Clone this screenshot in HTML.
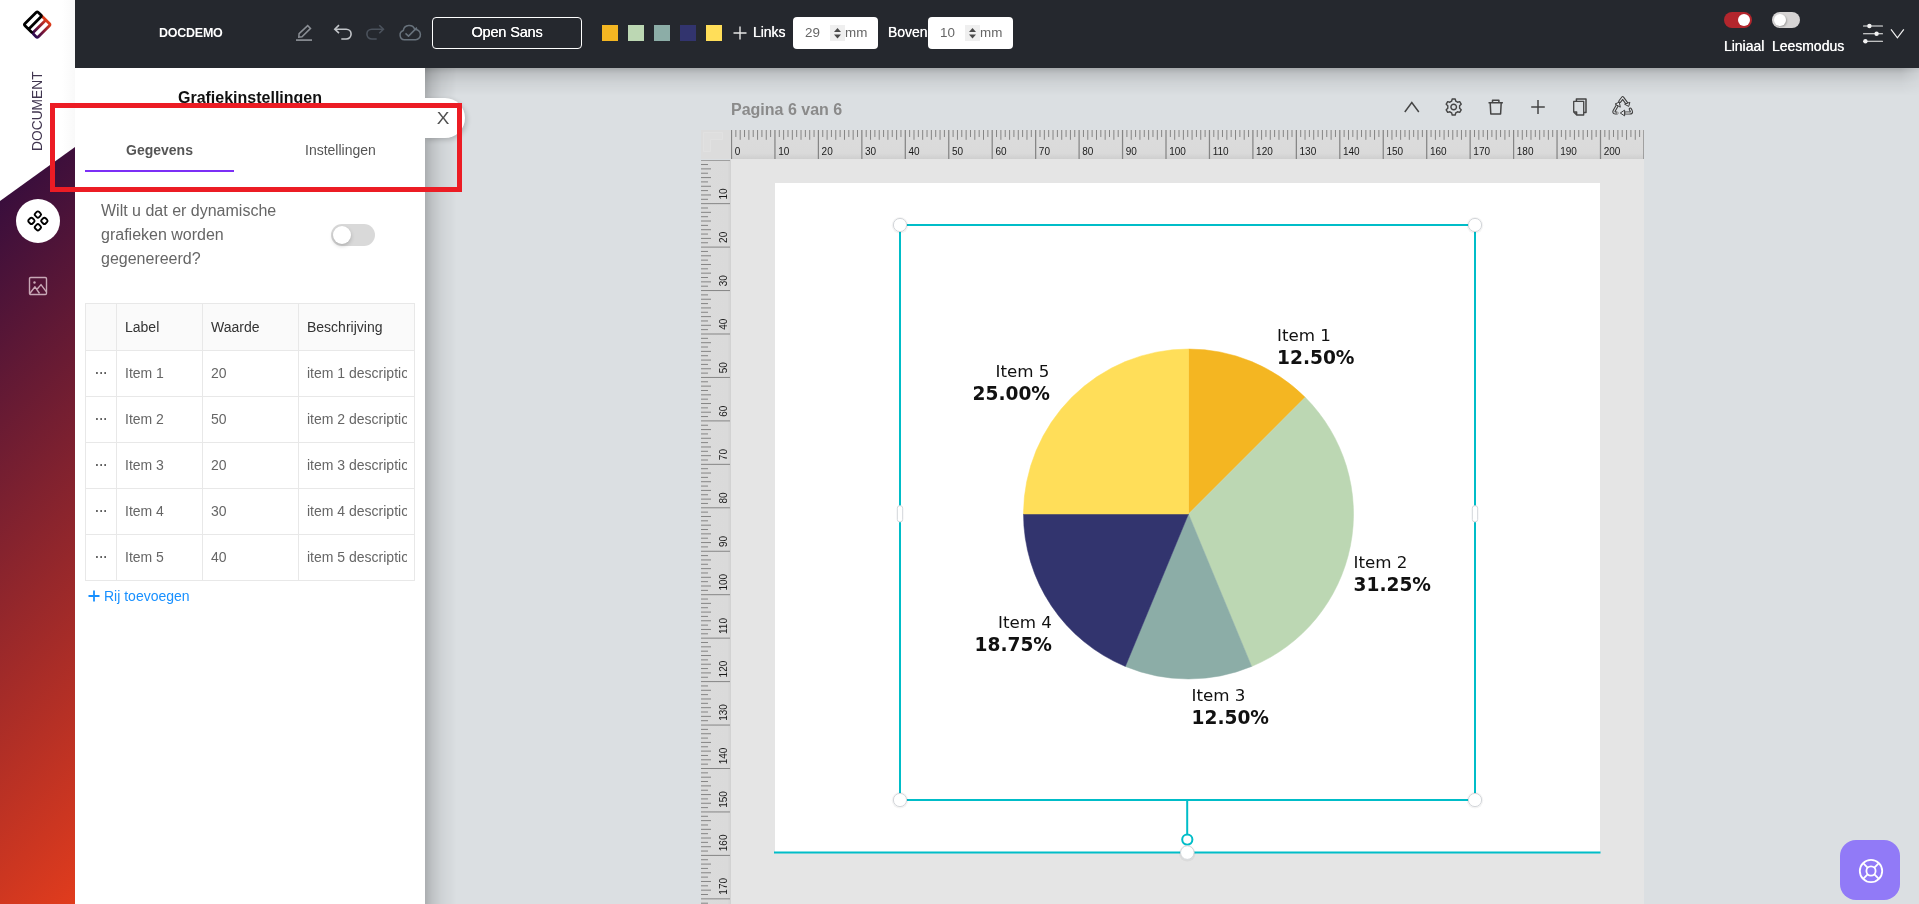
<!DOCTYPE html>
<html lang="nl">
<head>
<meta charset="utf-8">
<title>DOCDEMO - Grafiekinstellingen</title>
<style>
*{box-sizing:border-box;margin:0;padding:0}
html,body{width:1919px;height:904px;overflow:hidden}
body{background:#dbdfe2;font-family:"Liberation Sans",Arial,sans-serif;color:#333;position:relative}
.abs{position:absolute}
#wrap{position:absolute;left:0;top:0;width:1919px;height:904px;overflow:hidden;will-change:transform}
/* sidebar */
#side{position:absolute;left:0;top:0;width:75px;height:904px;background:linear-gradient(90deg,#fff 0,#fff 62px,#f9f9f9 75px)}
#sidegrad{position:absolute;left:0;top:0;width:75px;height:904px;background:linear-gradient(135deg,rgb(14,2,68) 0%,rgb(225,60,29) 100%);clip-path:polygon(0 201px,75px 147px,75px 904px,0 904px)}
#doclabel{position:absolute;left:28px;top:151px;transform-origin:0 0;transform:rotate(-90deg);font-size:13.8px;letter-spacing:0;color:#40354f;white-space:nowrap;line-height:20px}
#circ{position:absolute;left:16px;top:199px;width:44px;height:44px;border-radius:50%;background:#fff}
/* topbar */
#top{position:absolute;left:75px;top:0;width:1844px;height:68px;background:#25282e}
#topshadow{position:absolute;left:425px;top:68px;width:1494px;height:30px;background:linear-gradient(180deg,rgba(0,0,0,.24) 0,rgba(0,0,0,.12) 6px,rgba(0,0,0,.05) 15px,rgba(0,0,0,0) 28px);-webkit-mask-image:linear-gradient(90deg,#000 0,#000 1476px,rgba(0,0,0,.45) 1494px);mask-image:linear-gradient(90deg,#000 0,#000 1476px,rgba(0,0,0,.45) 1494px)}
#top .t{position:absolute;color:#fff;white-space:nowrap}
#docname{left:84px;top:26px;font-size:12.5px;font-weight:bold;letter-spacing:-.25px;line-height:14px}
#fontbox{position:absolute;left:357px;top:17px;width:150px;height:32px;border:1px solid #fff;border-radius:4px;color:#fff;font-size:14.6px;text-align:center;line-height:28px;letter-spacing:-.2px;text-shadow:0 0 .6px #fff}
.sw{position:absolute;top:25px;width:16px;height:16px}
.numbox{position:absolute;top:17px;width:85px;height:32px;background:#fff;border-radius:4px}
.numbox .v{position:absolute;left:12px;top:8px;font-size:13.4px;color:#666;line-height:16px}
.numbox .sp{position:absolute;left:37px;top:8px;width:15px;height:16px;background:#efefef}
.numbox .mm{position:absolute;left:52px;top:8px;font-size:13.4px;color:#666;line-height:16px}
.pill{position:absolute;top:12px;width:28px;height:16px;border-radius:8px}
.pill i{position:absolute;top:2px;width:12px;height:12px;border-radius:50%;background:#fff}
/* panel */
#panel{position:absolute;left:75px;top:68px;width:350px;height:836px;background:#fff}
#pshadow{position:absolute;left:425px;top:68px;width:34px;height:836px;background:linear-gradient(90deg,rgba(0,0,0,.22) 0,rgba(0,0,0,.13) 7px,rgba(0,0,0,.05) 17px,rgba(0,0,0,0) 32px)}
#closetab{position:absolute;left:425px;top:98px;width:40px;height:40px;background:#fff;border-radius:0 20px 20px 0;box-shadow:2px 2px 5px rgba(0,0,0,.18)}
#closetab span{position:absolute;left:8px;top:10px;width:20px;text-align:center;font-size:16.5px;line-height:20px;color:#505050;transform:scaleX(1.15);font-weight:normal}
#ptitle{position:absolute;left:0;top:21px;width:350px;text-align:center;font-size:16px;font-weight:bold;color:#111;line-height:18px}
.tab{position:absolute;top:73px;font-size:14px;line-height:18px;color:#555;white-space:nowrap}
#tabline{position:absolute;left:10px;top:102px;width:149px;height:2px;background:#7c2ff6}
#q{position:absolute;left:26px;top:131px;width:200px;font-size:16px;line-height:24px;color:#666}
#qtog{position:absolute;left:256px;top:156px;width:44px;height:22px;border-radius:11px;background:#d9d9d9}
#qtog i{position:absolute;left:2px;top:2px;width:18px;height:18px;border-radius:50%;background:#fff;box-shadow:0 2px 4px rgba(0,0,0,.2)}
#tbl{position:absolute;left:10px;top:235px;width:329px;border-collapse:collapse;table-layout:fixed;font-size:14px}
#tbl td,#tbl th{border:1px solid #e8e8e8;height:46px;padding:0 0 0 8px;text-align:left;font-weight:normal;white-space:nowrap;overflow:hidden}
#tbl th{background:#fafafa;color:#333;height:47px}
#tbl td{color:#666;padding-bottom:2px}
#tbl td.d{padding:0 0 2px 1px;text-align:center;color:#5a5a5a;font-size:12px;letter-spacing:.2px;font-weight:bold}
#tbl td div{width:100px;overflow:hidden}
#addrow{position:absolute;left:13px;top:519px;font-size:14px;line-height:18px;color:#1890ff;white-space:nowrap}
/* canvas */
#pgtitle{position:absolute;left:731px;top:101px;font-size:16px;font-weight:bold;color:#8a8a8a;line-height:18px;white-space:nowrap}
#canvasbg{position:absolute;left:731px;top:158px;width:913px;height:746px;background:#e5e5e5}
#hr{position:absolute;left:731px;top:130px;width:913px;height:29px;background:linear-gradient(180deg,#dcdcdc 0,#dadada 80%,#cfcfcf 100%)}
#vr{position:absolute;left:701px;top:160px;width:30px;height:744px;background:linear-gradient(90deg,#dbdbdb 0,#dadada 88%,#d1d1d1 100%)}
#corner{position:absolute;left:701px;top:130px;width:30px;height:29px;background:#dcdcdc}
svg.rul text{font-family:"Liberation Sans",Arial,sans-serif;font-size:10px;fill:#1a1a1a}
svg.rul .mj{stroke:#858585;stroke-width:1.25}
svg.rul .mn{stroke:#858585;stroke-width:1}
svg.rul.v .mj{stroke-width:1}
#page{position:absolute;left:775px;top:183px;width:825px;height:669px;background:#fff}
#overlay{position:absolute;left:0;top:0;width:1919px;height:904px;pointer-events:none}
#overlay text{font-family:"DejaVu Sans",sans-serif;fill:#111}
#help{position:absolute;left:1840px;top:840px;width:60px;height:60px;border-radius:16px;background:#917af7}
#redbox{position:absolute;left:50px;top:103px;width:412px;height:89px;border:5px solid #ec1c24}
</style>
</head>
<body>
<div id="wrap">

<!-- ============ sidebar ============ -->
<div id="side"></div>
<div id="sidegrad"></div>
<svg class="abs" style="left:15px;top:3px" width="46" height="46" viewBox="0 0 46 46">
  <defs><linearGradient id="lg" gradientUnits="userSpaceOnUse" x1="-10" y1="0" x2="10" y2="0"><stop offset="0" stop-color="#2a0a52"/><stop offset=".45" stop-color="#7a1638"/><stop offset="1" stop-color="#e03c18"/></linearGradient></defs>
  <g transform="translate(22.2,21.6) rotate(-45)" fill="none" stroke-width="2.8" stroke-linejoin="round" stroke-linecap="butt">
    <path d="M9.4 -3.6 V7.8 Q9.4 9.4 7.8 9.4 H-7.8 Q-9.4 9.4 -9.4 7.8 V4.4 Q-9.4 2.8 -7.8 2.8 H9.4" stroke="url(#lg)"/>
    <path d="M-9.4 2.6 V-7.8 Q-9.4 -9.4 -7.8 -9.4 H7.8 Q9.4 -9.4 9.4 -7.8 V-4.4 Q9.4 -2.8 7.8 -2.8 H-9.4" stroke="#000"/>
  </g>
</svg>
<div id="doclabel">DOCUMENT</div>
<div id="circ"></div>
<svg class="abs" style="left:26px;top:209px" width="24" height="24" viewBox="0 0 24 24" fill="none" stroke="#000" stroke-width="1.9" stroke-linejoin="round">
  <rect x="9.200" y="2.800" width="5.400" height="5.400" rx="1.700" transform="rotate(45 11.900 5.500)"/>
  <rect x="9.200" y="15.600" width="5.400" height="5.400" rx="1.700" transform="rotate(45 11.900 18.300)"/>
  <rect x="2.700" y="9.200" width="5.400" height="5.400" rx="1.700" transform="rotate(45 5.400 11.900)"/>
  <rect x="15.700" y="9.200" width="5.400" height="5.400" rx="1.700" transform="rotate(45 18.400 11.900)"/>
</svg>
<svg class="abs" style="left:28px;top:276px" width="20" height="20" viewBox="0 0 20 20" fill="none" stroke="#c8a8b6" stroke-width="1.4" stroke-linejoin="round">
  <rect x="1.5" y="1.5" width="17" height="17" rx="1.2"/>
  <circle cx="6.5" cy="6.5" r="1.2" fill="#c9a9b6" stroke="none"/>
  <path d="M1.8 17.5 L7 10.8 L11.5 17.5 M8.8 13.5 L13 8.6 L18.2 15.6"/>
</svg>

<!-- ============ top bar ============ -->
<div id="top">
  <div class="t" id="docname">DOCDEMO</div>
  <!-- pencil -->
  <svg class="abs" style="left:219px;top:23px" width="20" height="20" viewBox="0 0 20 20" fill="none" stroke="#8a8e94" stroke-width="1.5" stroke-linejoin="miter">
    <path d="M4.8 14.1 L5.1 10.7 L13.7 2.6 L16.5 5.4 L8 13.7 Z"/><path d="M2 17.1 H18" stroke-width="1.7"/>
  </svg>
  <!-- undo -->
  <svg class="abs" style="left:257px;top:22px" width="22" height="20" viewBox="0 0 22 20" fill="none" stroke="#c2c5c9" stroke-width="1.6" stroke-linejoin="miter">
    <path d="M7 3.2 L2.8 7.2 L7 11.2"/><path d="M3.200 7.2 H14.200 A4.900 4.900 0 0 1 14.200 17 H9.300"/>
  </svg>
  <!-- redo -->
  <svg class="abs" style="left:289px;top:22px" width="22" height="20" viewBox="0 0 22 20" fill="none" stroke="#4b525c" stroke-width="1.6" stroke-linejoin="miter">
    <path d="M15.300 3.2 L19.400 7.2 L15.300 11.200"/><path d="M19 7.2 H7.800 A4.900 4.900 0 0 0 7.800 17 H12.700"/>
  </svg>
  <!-- cloud check -->
  <svg class="abs" style="left:323px;top:22px" width="24" height="20" viewBox="0 0 24 20" fill="none" stroke="#68727c" stroke-width="1.5" stroke-linejoin="round" stroke-linecap="butt">
    <path d="M6.4 17.800 A4.800 4.800 0 0 1 5.300 8.500 A6 6 0 0 1 16.800 7.400 A5.200 5.200 0 0 1 17.600 17.800 Z"/><path d="M7.500 11.400 L10.500 14.100 L18.900 5.600"/>
  </svg>
  <div id="fontbox">Open Sans</div>
  <div class="sw" style="left:527px;background:#f4b622"></div>
  <div class="sw" style="left:553px;background:#bcd7b3"></div>
  <div class="sw" style="left:579px;background:#8cada7"></div>
  <div class="sw" style="left:605px;background:#32346e"></div>
  <div class="sw" style="left:631px;background:#ffde59"></div>
  <svg class="abs" style="left:658px;top:26px" width="14" height="14" viewBox="0 0 14 14" stroke="#e6e6e6" stroke-width="1.4"><path d="M7 .5V13.5M.5 7H13.5"/></svg>
  <div class="t" style="left:678px;top:24px;font-size:14px;line-height:16px;text-shadow:0 0 .7px #fff;letter-spacing:-.03px">Links</div>
  <div class="numbox" style="left:718px"><span class="v">29</span><span class="sp"><svg width="15" height="16" viewBox="0 0 15 16"><path d="M4 7 L7.5 3 L11 7Z M4 9.6 L7.5 13.6 L11 9.6Z" fill="#4a4a4a"/></svg></span><span class="mm">mm</span></div>
  <div class="t" style="left:813px;top:24px;font-size:14px;line-height:16px;text-shadow:0 0 .7px #fff;letter-spacing:-.03px">Boven</div>
  <div class="numbox" style="left:853px"><span class="v">10</span><span class="sp"><svg width="15" height="16" viewBox="0 0 15 16"><path d="M4 7 L7.5 3 L11 7Z M4 9.6 L7.5 13.6 L11 9.6Z" fill="#4a4a4a"/></svg></span><span class="mm">mm</span></div>

  <div class="pill" style="left:1649px;background:#b3262d"><i style="left:14px"></i></div>
  <div class="pill" style="left:1697px;background:#d6d4d4"><i style="left:2px;box-shadow:1px 1px 2px rgba(0,0,0,.25)"></i></div>
  <div class="t" style="left:1649px;top:38px;font-size:14px;line-height:16px;text-shadow:0 0 .7px #fff;letter-spacing:-.03px">Liniaal</div>
  <div class="t" style="left:1697px;top:38px;font-size:14px;line-height:16px;text-shadow:0 0 .7px #fff;letter-spacing:-.03px">Leesmodus</div>
  <!-- sliders -->
  <svg class="abs" style="left:1787px;top:22px" width="24" height="24" viewBox="0 0 24 24" fill="#f2f2f2" stroke="#f2f2f2" stroke-width="1.1" stroke-linecap="round">
    <path d="M1.5 4H20.5M1.5 11.7H20.5M1.5 19.3H20.5"/>
    <circle cx="7.4" cy="4" r="2.2" stroke="none"/><circle cx="14.6" cy="11.7" r="2.2" stroke="none"/><circle cx="3.4" cy="19.3" r="2.2" stroke="none"/>
  </svg>
  <svg class="abs" style="left:1815px;top:28px" width="15" height="12" viewBox="0 0 15 12" fill="none" stroke="#f2f2f2" stroke-width="1.2"><path d="M1 1.4 L7.4 9.8 L13.8 1.4"/></svg>
</div>

<!-- ============ left settings panel ============ -->
<div id="topshadow"></div>
<div id="pshadow"></div>
<div id="closetab"><span>X</span></div>
<div id="panel">
  <div id="ptitle">Grafiekinstellingen</div>
  <div class="tab" style="left:51px;font-weight:bold">Gegevens</div>
  <div class="tab" style="left:230px;color:#555">Instellingen</div>
  <div id="tabline"></div>
  <div id="q">Wilt u dat er dynamische grafieken worden gegenereerd?</div>
  <div id="qtog"><i></i></div>
  <table id="tbl">
    <colgroup><col style="width:31px"><col style="width:86px"><col style="width:96px"><col style="width:116px"></colgroup>
    <tr><th></th><th>Label</th><th>Waarde</th><th>Beschrijving</th></tr>
    <tr><td class="d">···</td><td>Item 1</td><td>20</td><td><div>item 1 description</div></td></tr>
    <tr><td class="d">···</td><td>Item 2</td><td>50</td><td><div>item 2 description</div></td></tr>
    <tr><td class="d">···</td><td>Item 3</td><td>20</td><td><div>item 3 description</div></td></tr>
    <tr><td class="d">···</td><td>Item 4</td><td>30</td><td><div>item 4 description</div></td></tr>
    <tr><td class="d">···</td><td>Item 5</td><td>40</td><td><div>item 5 description</div></td></tr>
  </table>
  <div id="addrow"><svg width="12" height="12" viewBox="0 0 12 12" style="vertical-align:-1px;margin-right:4px" stroke="#1890ff" stroke-width="1.8"><path d="M6 .5V11.5M.5 6H11.5"/></svg>Rij toevoegen</div>
</div>

<!-- ============ canvas ============ -->
<div id="pgtitle">Pagina 6 van 6</div>
<!-- page tool icons -->
<svg class="abs" style="left:1400px;top:94px" width="240" height="26" viewBox="0 0 240 26" fill="none" stroke="#454545" stroke-width="1.5" stroke-linejoin="round" stroke-linecap="butt">
  <path d="M4.8 18 L11.800 8.600 L18.800 18" stroke-linejoin="miter"/>
  <g transform="translate(53.700,13)" stroke-width="1.4"><circle r="2.800"/><path d="M-1.500 -8 h3 l.6 2.200 l1.700 1 l2.200 -.6 l1.500 2.600 l-1.600 1.600 v2.400 l1.600 1.600 l-1.500 2.600 l-2.200 -.6 l-1.700 1 l-.6 2.200 h-3 l-.6 -2.200 l-1.700 -1 l-2.200 .6 l-1.500 -2.600 l1.600 -1.600 v-2.400 l-1.600 -1.600 l1.500 -2.600 l2.200 .6 l1.700 -1 z"/></g>
  <g transform="translate(95.700,13)"><path d="M-7.200 -4.300 H7.200 M-3.200 -4.300 V-6.800 H3.200 V-4.300 M-5.500 -4.300 L-4.900 7 H4.900 L5.500 -4.300"/></g>
  <path d="M138 6 V20 M131.200 13 H144.800"/>
  <g transform="translate(179.700,13)"><path d="M-3.300 -5.800 V-8 H6.300 V5.600 H4.200"/><path d="M-6 -5.600 H4 V8 H-3 L-6 5 Z M-6 5 H-3 V8" stroke-width="1.300"/></g>
  <g stroke="#3c3c3c" stroke-width="3.200" stroke-linecap="round">
    <path d="M219.800 7.400 L222.700 3.700 L226.700 9.200"/>
    <path d="M216.800 19 H215.300 Q213.200 18.800 214.200 16.700 L217.200 11.500"/>
    <path d="M230.300 15.200 Q232.800 18.900 230 19 H225"/>
  </g>
  <g stroke="#dde0e3" stroke-width="1.100" stroke-linecap="round">
    <path d="M219.800 7.400 L222.700 3.700 L226.700 9.200"/>
    <path d="M216.200 19 H215.300 Q213.200 18.800 214.200 16.700 L217.200 11.500"/>
    <path d="M230.300 15.200 Q232.800 18.900 230 19 H225"/>
  </g>
  <g stroke="#3c3c3c" stroke-width="1" fill="#e3e5e8" stroke-linejoin="miter">
    <path d="M228.700 12.400 L224.600 10.200 L229.900 8.300 Z"/>
    <path d="M219.300 8.100 L215.100 10 L220.300 13.200 Z"/>
    <path d="M220.300 19 L224.600 16.100 V21.900 Z"/>
  </g>
  <path d="M216.800 19 H218.600 M226 19 H229.500" stroke="#a9a9a9" stroke-width="2.200"/>
</svg>

<div id="canvasbg"></div>
<div id="corner"><svg width="30" height="29" viewBox="0 0 30 29"><path d="M2.500 2.500 H21.500 V9.500 H9.500 V21.500 H2.500 Z" fill="#dedede" stroke="#e1e1e1" stroke-width="1"/></svg></div>
<div id="hr"><svg class="rul" width="913" height="29" viewBox="0 0 913 29">
<line x1="0.50" y1="0" x2="0.50" y2="29" class="mj"/>
<text x="3.70" y="25.4">0</text>
<line x1="4.85" y1="0" x2="4.85" y2="7" class="mn"/>
<line x1="9.19" y1="0" x2="9.19" y2="9.8" class="mn"/>
<line x1="13.53" y1="0" x2="13.53" y2="7" class="mn"/>
<line x1="17.88" y1="0" x2="17.88" y2="9.8" class="mn"/>
<line x1="22.23" y1="0" x2="22.23" y2="7" class="mn"/>
<line x1="26.57" y1="0" x2="26.57" y2="9.8" class="mn"/>
<line x1="30.91" y1="0" x2="30.91" y2="7" class="mn"/>
<line x1="35.26" y1="0" x2="35.26" y2="9.8" class="mn"/>
<line x1="39.61" y1="0" x2="39.61" y2="7" class="mn"/>
<line x1="43.95" y1="0" x2="43.95" y2="29" class="mj"/>
<text x="47.15" y="25.4">10</text>
<line x1="48.29" y1="0" x2="48.29" y2="7" class="mn"/>
<line x1="52.64" y1="0" x2="52.64" y2="9.8" class="mn"/>
<line x1="56.99" y1="0" x2="56.99" y2="7" class="mn"/>
<line x1="61.33" y1="0" x2="61.33" y2="9.8" class="mn"/>
<line x1="65.67" y1="0" x2="65.67" y2="7" class="mn"/>
<line x1="70.02" y1="0" x2="70.02" y2="9.8" class="mn"/>
<line x1="74.37" y1="0" x2="74.37" y2="7" class="mn"/>
<line x1="78.71" y1="0" x2="78.71" y2="9.8" class="mn"/>
<line x1="83.05" y1="0" x2="83.05" y2="7" class="mn"/>
<line x1="87.40" y1="0" x2="87.40" y2="29" class="mj"/>
<text x="90.60" y="25.4">20</text>
<line x1="91.75" y1="0" x2="91.75" y2="7" class="mn"/>
<line x1="96.09" y1="0" x2="96.09" y2="9.8" class="mn"/>
<line x1="100.43" y1="0" x2="100.43" y2="7" class="mn"/>
<line x1="104.78" y1="0" x2="104.78" y2="9.8" class="mn"/>
<line x1="109.12" y1="0" x2="109.12" y2="7" class="mn"/>
<line x1="113.47" y1="0" x2="113.47" y2="9.8" class="mn"/>
<line x1="117.82" y1="0" x2="117.82" y2="7" class="mn"/>
<line x1="122.16" y1="0" x2="122.16" y2="9.8" class="mn"/>
<line x1="126.50" y1="0" x2="126.50" y2="7" class="mn"/>
<line x1="130.85" y1="0" x2="130.85" y2="29" class="mj"/>
<text x="134.05" y="25.4">30</text>
<line x1="135.19" y1="0" x2="135.19" y2="7" class="mn"/>
<line x1="139.54" y1="0" x2="139.54" y2="9.8" class="mn"/>
<line x1="143.88" y1="0" x2="143.88" y2="7" class="mn"/>
<line x1="148.23" y1="0" x2="148.23" y2="9.8" class="mn"/>
<line x1="152.58" y1="0" x2="152.58" y2="7" class="mn"/>
<line x1="156.92" y1="0" x2="156.92" y2="9.8" class="mn"/>
<line x1="161.26" y1="0" x2="161.26" y2="7" class="mn"/>
<line x1="165.61" y1="0" x2="165.61" y2="9.8" class="mn"/>
<line x1="169.95" y1="0" x2="169.95" y2="7" class="mn"/>
<line x1="174.30" y1="0" x2="174.30" y2="29" class="mj"/>
<text x="177.50" y="25.4">40</text>
<line x1="178.64" y1="0" x2="178.64" y2="7" class="mn"/>
<line x1="182.99" y1="0" x2="182.99" y2="9.8" class="mn"/>
<line x1="187.34" y1="0" x2="187.34" y2="7" class="mn"/>
<line x1="191.68" y1="0" x2="191.68" y2="9.8" class="mn"/>
<line x1="196.02" y1="0" x2="196.02" y2="7" class="mn"/>
<line x1="200.37" y1="0" x2="200.37" y2="9.8" class="mn"/>
<line x1="204.71" y1="0" x2="204.71" y2="7" class="mn"/>
<line x1="209.06" y1="0" x2="209.06" y2="9.8" class="mn"/>
<line x1="213.40" y1="0" x2="213.40" y2="7" class="mn"/>
<line x1="217.75" y1="0" x2="217.75" y2="29" class="mj"/>
<text x="220.95" y="25.4">50</text>
<line x1="222.10" y1="0" x2="222.10" y2="7" class="mn"/>
<line x1="226.44" y1="0" x2="226.44" y2="9.8" class="mn"/>
<line x1="230.78" y1="0" x2="230.78" y2="7" class="mn"/>
<line x1="235.13" y1="0" x2="235.13" y2="9.8" class="mn"/>
<line x1="239.48" y1="0" x2="239.48" y2="7" class="mn"/>
<line x1="243.82" y1="0" x2="243.82" y2="9.8" class="mn"/>
<line x1="248.16" y1="0" x2="248.16" y2="7" class="mn"/>
<line x1="252.51" y1="0" x2="252.51" y2="9.8" class="mn"/>
<line x1="256.86" y1="0" x2="256.86" y2="7" class="mn"/>
<line x1="261.20" y1="0" x2="261.20" y2="29" class="mj"/>
<text x="264.40" y="25.4">60</text>
<line x1="265.54" y1="0" x2="265.54" y2="7" class="mn"/>
<line x1="269.89" y1="0" x2="269.89" y2="9.8" class="mn"/>
<line x1="274.23" y1="0" x2="274.23" y2="7" class="mn"/>
<line x1="278.58" y1="0" x2="278.58" y2="9.8" class="mn"/>
<line x1="282.92" y1="0" x2="282.92" y2="7" class="mn"/>
<line x1="287.27" y1="0" x2="287.27" y2="9.8" class="mn"/>
<line x1="291.62" y1="0" x2="291.62" y2="7" class="mn"/>
<line x1="295.96" y1="0" x2="295.96" y2="9.8" class="mn"/>
<line x1="300.31" y1="0" x2="300.31" y2="7" class="mn"/>
<line x1="304.65" y1="0" x2="304.65" y2="29" class="mj"/>
<text x="307.85" y="25.4">70</text>
<line x1="308.99" y1="0" x2="308.99" y2="7" class="mn"/>
<line x1="313.34" y1="0" x2="313.34" y2="9.8" class="mn"/>
<line x1="317.68" y1="0" x2="317.68" y2="7" class="mn"/>
<line x1="322.03" y1="0" x2="322.03" y2="9.8" class="mn"/>
<line x1="326.38" y1="0" x2="326.38" y2="7" class="mn"/>
<line x1="330.72" y1="0" x2="330.72" y2="9.8" class="mn"/>
<line x1="335.07" y1="0" x2="335.07" y2="7" class="mn"/>
<line x1="339.41" y1="0" x2="339.41" y2="9.8" class="mn"/>
<line x1="343.76" y1="0" x2="343.76" y2="7" class="mn"/>
<line x1="348.10" y1="0" x2="348.10" y2="29" class="mj"/>
<text x="351.30" y="25.4">80</text>
<line x1="352.44" y1="0" x2="352.44" y2="7" class="mn"/>
<line x1="356.79" y1="0" x2="356.79" y2="9.8" class="mn"/>
<line x1="361.13" y1="0" x2="361.13" y2="7" class="mn"/>
<line x1="365.48" y1="0" x2="365.48" y2="9.8" class="mn"/>
<line x1="369.83" y1="0" x2="369.83" y2="7" class="mn"/>
<line x1="374.17" y1="0" x2="374.17" y2="9.8" class="mn"/>
<line x1="378.51" y1="0" x2="378.51" y2="7" class="mn"/>
<line x1="382.86" y1="0" x2="382.86" y2="9.8" class="mn"/>
<line x1="387.20" y1="0" x2="387.20" y2="7" class="mn"/>
<line x1="391.55" y1="0" x2="391.55" y2="29" class="mj"/>
<text x="394.75" y="25.4">90</text>
<line x1="395.89" y1="0" x2="395.89" y2="7" class="mn"/>
<line x1="400.24" y1="0" x2="400.24" y2="9.8" class="mn"/>
<line x1="404.59" y1="0" x2="404.59" y2="7" class="mn"/>
<line x1="408.93" y1="0" x2="408.93" y2="9.8" class="mn"/>
<line x1="413.28" y1="0" x2="413.28" y2="7" class="mn"/>
<line x1="417.62" y1="0" x2="417.62" y2="9.8" class="mn"/>
<line x1="421.96" y1="0" x2="421.96" y2="7" class="mn"/>
<line x1="426.31" y1="0" x2="426.31" y2="9.8" class="mn"/>
<line x1="430.65" y1="0" x2="430.65" y2="7" class="mn"/>
<line x1="435.00" y1="0" x2="435.00" y2="29" class="mj"/>
<text x="438.20" y="25.4">100</text>
<line x1="439.35" y1="0" x2="439.35" y2="7" class="mn"/>
<line x1="443.69" y1="0" x2="443.69" y2="9.8" class="mn"/>
<line x1="448.03" y1="0" x2="448.03" y2="7" class="mn"/>
<line x1="452.38" y1="0" x2="452.38" y2="9.8" class="mn"/>
<line x1="456.72" y1="0" x2="456.72" y2="7" class="mn"/>
<line x1="461.07" y1="0" x2="461.07" y2="9.8" class="mn"/>
<line x1="465.41" y1="0" x2="465.41" y2="7" class="mn"/>
<line x1="469.76" y1="0" x2="469.76" y2="9.8" class="mn"/>
<line x1="474.11" y1="0" x2="474.11" y2="7" class="mn"/>
<line x1="478.45" y1="0" x2="478.45" y2="29" class="mj"/>
<text x="481.65" y="25.4">110</text>
<line x1="482.80" y1="0" x2="482.80" y2="7" class="mn"/>
<line x1="487.14" y1="0" x2="487.14" y2="9.8" class="mn"/>
<line x1="491.48" y1="0" x2="491.48" y2="7" class="mn"/>
<line x1="495.83" y1="0" x2="495.83" y2="9.8" class="mn"/>
<line x1="500.17" y1="0" x2="500.17" y2="7" class="mn"/>
<line x1="504.52" y1="0" x2="504.52" y2="9.8" class="mn"/>
<line x1="508.87" y1="0" x2="508.87" y2="7" class="mn"/>
<line x1="513.21" y1="0" x2="513.21" y2="9.8" class="mn"/>
<line x1="517.55" y1="0" x2="517.55" y2="7" class="mn"/>
<line x1="521.90" y1="0" x2="521.90" y2="29" class="mj"/>
<text x="525.10" y="25.4">120</text>
<line x1="526.24" y1="0" x2="526.24" y2="7" class="mn"/>
<line x1="530.59" y1="0" x2="530.59" y2="9.8" class="mn"/>
<line x1="534.93" y1="0" x2="534.93" y2="7" class="mn"/>
<line x1="539.28" y1="0" x2="539.28" y2="9.8" class="mn"/>
<line x1="543.62" y1="0" x2="543.62" y2="7" class="mn"/>
<line x1="547.97" y1="0" x2="547.97" y2="9.8" class="mn"/>
<line x1="552.32" y1="0" x2="552.32" y2="7" class="mn"/>
<line x1="556.66" y1="0" x2="556.66" y2="9.8" class="mn"/>
<line x1="561.01" y1="0" x2="561.01" y2="7" class="mn"/>
<line x1="565.35" y1="0" x2="565.35" y2="29" class="mj"/>
<text x="568.55" y="25.4">130</text>
<line x1="569.69" y1="0" x2="569.69" y2="7" class="mn"/>
<line x1="574.04" y1="0" x2="574.04" y2="9.8" class="mn"/>
<line x1="578.38" y1="0" x2="578.38" y2="7" class="mn"/>
<line x1="582.73" y1="0" x2="582.73" y2="9.8" class="mn"/>
<line x1="587.07" y1="0" x2="587.07" y2="7" class="mn"/>
<line x1="591.42" y1="0" x2="591.42" y2="9.8" class="mn"/>
<line x1="595.76" y1="0" x2="595.76" y2="7" class="mn"/>
<line x1="600.11" y1="0" x2="600.11" y2="9.8" class="mn"/>
<line x1="604.45" y1="0" x2="604.45" y2="7" class="mn"/>
<line x1="608.80" y1="0" x2="608.80" y2="29" class="mj"/>
<text x="612.00" y="25.4">140</text>
<line x1="613.14" y1="0" x2="613.14" y2="7" class="mn"/>
<line x1="617.49" y1="0" x2="617.49" y2="9.8" class="mn"/>
<line x1="621.84" y1="0" x2="621.84" y2="7" class="mn"/>
<line x1="626.18" y1="0" x2="626.18" y2="9.8" class="mn"/>
<line x1="630.53" y1="0" x2="630.53" y2="7" class="mn"/>
<line x1="634.87" y1="0" x2="634.87" y2="9.8" class="mn"/>
<line x1="639.21" y1="0" x2="639.21" y2="7" class="mn"/>
<line x1="643.56" y1="0" x2="643.56" y2="9.8" class="mn"/>
<line x1="647.90" y1="0" x2="647.90" y2="7" class="mn"/>
<line x1="652.25" y1="0" x2="652.25" y2="29" class="mj"/>
<text x="655.45" y="25.4">150</text>
<line x1="656.59" y1="0" x2="656.59" y2="7" class="mn"/>
<line x1="660.94" y1="0" x2="660.94" y2="9.8" class="mn"/>
<line x1="665.28" y1="0" x2="665.28" y2="7" class="mn"/>
<line x1="669.63" y1="0" x2="669.63" y2="9.8" class="mn"/>
<line x1="673.97" y1="0" x2="673.97" y2="7" class="mn"/>
<line x1="678.32" y1="0" x2="678.32" y2="9.8" class="mn"/>
<line x1="682.66" y1="0" x2="682.66" y2="7" class="mn"/>
<line x1="687.01" y1="0" x2="687.01" y2="9.8" class="mn"/>
<line x1="691.36" y1="0" x2="691.36" y2="7" class="mn"/>
<line x1="695.70" y1="0" x2="695.70" y2="29" class="mj"/>
<text x="698.90" y="25.4">160</text>
<line x1="700.05" y1="0" x2="700.05" y2="7" class="mn"/>
<line x1="704.39" y1="0" x2="704.39" y2="9.8" class="mn"/>
<line x1="708.74" y1="0" x2="708.74" y2="7" class="mn"/>
<line x1="713.08" y1="0" x2="713.08" y2="9.8" class="mn"/>
<line x1="717.42" y1="0" x2="717.42" y2="7" class="mn"/>
<line x1="721.77" y1="0" x2="721.77" y2="9.8" class="mn"/>
<line x1="726.12" y1="0" x2="726.12" y2="7" class="mn"/>
<line x1="730.46" y1="0" x2="730.46" y2="9.8" class="mn"/>
<line x1="734.80" y1="0" x2="734.80" y2="7" class="mn"/>
<line x1="739.15" y1="0" x2="739.15" y2="29" class="mj"/>
<text x="742.35" y="25.4">170</text>
<line x1="743.49" y1="0" x2="743.49" y2="7" class="mn"/>
<line x1="747.84" y1="0" x2="747.84" y2="9.8" class="mn"/>
<line x1="752.18" y1="0" x2="752.18" y2="7" class="mn"/>
<line x1="756.53" y1="0" x2="756.53" y2="9.8" class="mn"/>
<line x1="760.88" y1="0" x2="760.88" y2="7" class="mn"/>
<line x1="765.22" y1="0" x2="765.22" y2="9.8" class="mn"/>
<line x1="769.57" y1="0" x2="769.57" y2="7" class="mn"/>
<line x1="773.91" y1="0" x2="773.91" y2="9.8" class="mn"/>
<line x1="778.26" y1="0" x2="778.26" y2="7" class="mn"/>
<line x1="782.60" y1="0" x2="782.60" y2="29" class="mj"/>
<text x="785.80" y="25.4">180</text>
<line x1="786.94" y1="0" x2="786.94" y2="7" class="mn"/>
<line x1="791.29" y1="0" x2="791.29" y2="9.8" class="mn"/>
<line x1="795.63" y1="0" x2="795.63" y2="7" class="mn"/>
<line x1="799.98" y1="0" x2="799.98" y2="9.8" class="mn"/>
<line x1="804.32" y1="0" x2="804.32" y2="7" class="mn"/>
<line x1="808.67" y1="0" x2="808.67" y2="9.8" class="mn"/>
<line x1="813.01" y1="0" x2="813.01" y2="7" class="mn"/>
<line x1="817.36" y1="0" x2="817.36" y2="9.8" class="mn"/>
<line x1="821.70" y1="0" x2="821.70" y2="7" class="mn"/>
<line x1="826.05" y1="0" x2="826.05" y2="29" class="mj"/>
<text x="829.25" y="25.4">190</text>
<line x1="830.39" y1="0" x2="830.39" y2="7" class="mn"/>
<line x1="834.74" y1="0" x2="834.74" y2="9.8" class="mn"/>
<line x1="839.09" y1="0" x2="839.09" y2="7" class="mn"/>
<line x1="843.43" y1="0" x2="843.43" y2="9.8" class="mn"/>
<line x1="847.78" y1="0" x2="847.78" y2="7" class="mn"/>
<line x1="852.12" y1="0" x2="852.12" y2="9.8" class="mn"/>
<line x1="856.46" y1="0" x2="856.46" y2="7" class="mn"/>
<line x1="860.81" y1="0" x2="860.81" y2="9.8" class="mn"/>
<line x1="865.15" y1="0" x2="865.15" y2="7" class="mn"/>
<line x1="869.50" y1="0" x2="869.50" y2="29" class="mj"/>
<text x="872.70" y="25.4">200</text>
<line x1="873.84" y1="0" x2="873.84" y2="7" class="mn"/>
<line x1="878.19" y1="0" x2="878.19" y2="9.8" class="mn"/>
<line x1="882.53" y1="0" x2="882.53" y2="7" class="mn"/>
<line x1="886.88" y1="0" x2="886.88" y2="9.8" class="mn"/>
<line x1="891.22" y1="0" x2="891.22" y2="7" class="mn"/>
<line x1="895.57" y1="0" x2="895.57" y2="9.8" class="mn"/>
<line x1="899.91" y1="0" x2="899.91" y2="7" class="mn"/>
<line x1="904.26" y1="0" x2="904.26" y2="9.8" class="mn"/>
<line x1="908.61" y1="0" x2="908.61" y2="7" class="mn"/>
<line x1="912.95" y1="0" x2="912.95" y2="29" class="mj"/>
<text x="916.15" y="25.4">210</text>
</svg></div>
<div id="vr"><svg class="rul v" width="30" height="744" viewBox="0 0 30 744">
<line x1="0" y1="0.20" x2="29" y2="0.20" class="mj"/>
<line x1="0" y1="4.54" x2="7" y2="4.54" class="mn"/>
<line x1="0" y1="8.89" x2="10" y2="8.89" class="mn"/>
<line x1="0" y1="13.23" x2="7" y2="13.23" class="mn"/>
<line x1="0" y1="17.58" x2="10" y2="17.58" class="mn"/>
<line x1="0" y1="21.92" x2="7" y2="21.92" class="mn"/>
<line x1="0" y1="26.27" x2="10" y2="26.27" class="mn"/>
<line x1="0" y1="30.61" x2="7" y2="30.61" class="mn"/>
<line x1="0" y1="34.96" x2="10" y2="34.96" class="mn"/>
<line x1="0" y1="39.30" x2="7" y2="39.30" class="mn"/>
<line x1="0" y1="43.65" x2="29" y2="43.65" class="mj"/>
<text transform="translate(25.7,39.45) rotate(-90)">10</text>
<line x1="0" y1="47.99" x2="7" y2="47.99" class="mn"/>
<line x1="0" y1="52.34" x2="10" y2="52.34" class="mn"/>
<line x1="0" y1="56.69" x2="7" y2="56.69" class="mn"/>
<line x1="0" y1="61.03" x2="10" y2="61.03" class="mn"/>
<line x1="0" y1="65.38" x2="7" y2="65.38" class="mn"/>
<line x1="0" y1="69.72" x2="10" y2="69.72" class="mn"/>
<line x1="0" y1="74.06" x2="7" y2="74.06" class="mn"/>
<line x1="0" y1="78.41" x2="10" y2="78.41" class="mn"/>
<line x1="0" y1="82.75" x2="7" y2="82.75" class="mn"/>
<line x1="0" y1="87.10" x2="29" y2="87.10" class="mj"/>
<text transform="translate(25.7,82.90) rotate(-90)">20</text>
<line x1="0" y1="91.44" x2="7" y2="91.44" class="mn"/>
<line x1="0" y1="95.79" x2="10" y2="95.79" class="mn"/>
<line x1="0" y1="100.13" x2="7" y2="100.13" class="mn"/>
<line x1="0" y1="104.48" x2="10" y2="104.48" class="mn"/>
<line x1="0" y1="108.82" x2="7" y2="108.82" class="mn"/>
<line x1="0" y1="113.17" x2="10" y2="113.17" class="mn"/>
<line x1="0" y1="117.51" x2="7" y2="117.51" class="mn"/>
<line x1="0" y1="121.86" x2="10" y2="121.86" class="mn"/>
<line x1="0" y1="126.20" x2="7" y2="126.20" class="mn"/>
<line x1="0" y1="130.55" x2="29" y2="130.55" class="mj"/>
<text transform="translate(25.7,126.35) rotate(-90)">30</text>
<line x1="0" y1="134.89" x2="7" y2="134.89" class="mn"/>
<line x1="0" y1="139.24" x2="10" y2="139.24" class="mn"/>
<line x1="0" y1="143.58" x2="7" y2="143.58" class="mn"/>
<line x1="0" y1="147.93" x2="10" y2="147.93" class="mn"/>
<line x1="0" y1="152.27" x2="7" y2="152.27" class="mn"/>
<line x1="0" y1="156.62" x2="10" y2="156.62" class="mn"/>
<line x1="0" y1="160.96" x2="7" y2="160.96" class="mn"/>
<line x1="0" y1="165.31" x2="10" y2="165.31" class="mn"/>
<line x1="0" y1="169.65" x2="7" y2="169.65" class="mn"/>
<line x1="0" y1="174.00" x2="29" y2="174.00" class="mj"/>
<text transform="translate(25.7,169.80) rotate(-90)">40</text>
<line x1="0" y1="178.34" x2="7" y2="178.34" class="mn"/>
<line x1="0" y1="182.69" x2="10" y2="182.69" class="mn"/>
<line x1="0" y1="187.03" x2="7" y2="187.03" class="mn"/>
<line x1="0" y1="191.38" x2="10" y2="191.38" class="mn"/>
<line x1="0" y1="195.72" x2="7" y2="195.72" class="mn"/>
<line x1="0" y1="200.07" x2="10" y2="200.07" class="mn"/>
<line x1="0" y1="204.41" x2="7" y2="204.41" class="mn"/>
<line x1="0" y1="208.76" x2="10" y2="208.76" class="mn"/>
<line x1="0" y1="213.11" x2="7" y2="213.11" class="mn"/>
<line x1="0" y1="217.45" x2="29" y2="217.45" class="mj"/>
<text transform="translate(25.7,213.25) rotate(-90)">50</text>
<line x1="0" y1="221.79" x2="7" y2="221.79" class="mn"/>
<line x1="0" y1="226.14" x2="10" y2="226.14" class="mn"/>
<line x1="0" y1="230.49" x2="7" y2="230.49" class="mn"/>
<line x1="0" y1="234.83" x2="10" y2="234.83" class="mn"/>
<line x1="0" y1="239.17" x2="7" y2="239.17" class="mn"/>
<line x1="0" y1="243.52" x2="10" y2="243.52" class="mn"/>
<line x1="0" y1="247.87" x2="7" y2="247.87" class="mn"/>
<line x1="0" y1="252.21" x2="10" y2="252.21" class="mn"/>
<line x1="0" y1="256.55" x2="7" y2="256.55" class="mn"/>
<line x1="0" y1="260.90" x2="29" y2="260.90" class="mj"/>
<text transform="translate(25.7,256.70) rotate(-90)">60</text>
<line x1="0" y1="265.24" x2="7" y2="265.24" class="mn"/>
<line x1="0" y1="269.59" x2="10" y2="269.59" class="mn"/>
<line x1="0" y1="273.93" x2="7" y2="273.93" class="mn"/>
<line x1="0" y1="278.28" x2="10" y2="278.28" class="mn"/>
<line x1="0" y1="282.62" x2="7" y2="282.62" class="mn"/>
<line x1="0" y1="286.97" x2="10" y2="286.97" class="mn"/>
<line x1="0" y1="291.31" x2="7" y2="291.31" class="mn"/>
<line x1="0" y1="295.66" x2="10" y2="295.66" class="mn"/>
<line x1="0" y1="300.00" x2="7" y2="300.00" class="mn"/>
<line x1="0" y1="304.35" x2="29" y2="304.35" class="mj"/>
<text transform="translate(25.7,300.15) rotate(-90)">70</text>
<line x1="0" y1="308.69" x2="7" y2="308.69" class="mn"/>
<line x1="0" y1="313.04" x2="10" y2="313.04" class="mn"/>
<line x1="0" y1="317.38" x2="7" y2="317.38" class="mn"/>
<line x1="0" y1="321.73" x2="10" y2="321.73" class="mn"/>
<line x1="0" y1="326.07" x2="7" y2="326.07" class="mn"/>
<line x1="0" y1="330.42" x2="10" y2="330.42" class="mn"/>
<line x1="0" y1="334.76" x2="7" y2="334.76" class="mn"/>
<line x1="0" y1="339.11" x2="10" y2="339.11" class="mn"/>
<line x1="0" y1="343.45" x2="7" y2="343.45" class="mn"/>
<line x1="0" y1="347.80" x2="29" y2="347.80" class="mj"/>
<text transform="translate(25.7,343.60) rotate(-90)">80</text>
<line x1="0" y1="352.14" x2="7" y2="352.14" class="mn"/>
<line x1="0" y1="356.49" x2="10" y2="356.49" class="mn"/>
<line x1="0" y1="360.84" x2="7" y2="360.84" class="mn"/>
<line x1="0" y1="365.18" x2="10" y2="365.18" class="mn"/>
<line x1="0" y1="369.52" x2="7" y2="369.52" class="mn"/>
<line x1="0" y1="373.87" x2="10" y2="373.87" class="mn"/>
<line x1="0" y1="378.21" x2="7" y2="378.21" class="mn"/>
<line x1="0" y1="382.56" x2="10" y2="382.56" class="mn"/>
<line x1="0" y1="386.90" x2="7" y2="386.90" class="mn"/>
<line x1="0" y1="391.25" x2="29" y2="391.25" class="mj"/>
<text transform="translate(25.7,387.05) rotate(-90)">90</text>
<line x1="0" y1="395.60" x2="7" y2="395.60" class="mn"/>
<line x1="0" y1="399.94" x2="10" y2="399.94" class="mn"/>
<line x1="0" y1="404.28" x2="7" y2="404.28" class="mn"/>
<line x1="0" y1="408.63" x2="10" y2="408.63" class="mn"/>
<line x1="0" y1="412.97" x2="7" y2="412.97" class="mn"/>
<line x1="0" y1="417.32" x2="10" y2="417.32" class="mn"/>
<line x1="0" y1="421.66" x2="7" y2="421.66" class="mn"/>
<line x1="0" y1="426.01" x2="10" y2="426.01" class="mn"/>
<line x1="0" y1="430.36" x2="7" y2="430.36" class="mn"/>
<line x1="0" y1="434.70" x2="29" y2="434.70" class="mj"/>
<text transform="translate(25.7,430.50) rotate(-90)">100</text>
<line x1="0" y1="439.04" x2="7" y2="439.04" class="mn"/>
<line x1="0" y1="443.39" x2="10" y2="443.39" class="mn"/>
<line x1="0" y1="447.73" x2="7" y2="447.73" class="mn"/>
<line x1="0" y1="452.08" x2="10" y2="452.08" class="mn"/>
<line x1="0" y1="456.42" x2="7" y2="456.42" class="mn"/>
<line x1="0" y1="460.77" x2="10" y2="460.77" class="mn"/>
<line x1="0" y1="465.12" x2="7" y2="465.12" class="mn"/>
<line x1="0" y1="469.46" x2="10" y2="469.46" class="mn"/>
<line x1="0" y1="473.80" x2="7" y2="473.80" class="mn"/>
<line x1="0" y1="478.15" x2="29" y2="478.15" class="mj"/>
<text transform="translate(25.7,473.95) rotate(-90)">110</text>
<line x1="0" y1="482.49" x2="7" y2="482.49" class="mn"/>
<line x1="0" y1="486.84" x2="10" y2="486.84" class="mn"/>
<line x1="0" y1="491.18" x2="7" y2="491.18" class="mn"/>
<line x1="0" y1="495.53" x2="10" y2="495.53" class="mn"/>
<line x1="0" y1="499.88" x2="7" y2="499.88" class="mn"/>
<line x1="0" y1="504.22" x2="10" y2="504.22" class="mn"/>
<line x1="0" y1="508.56" x2="7" y2="508.56" class="mn"/>
<line x1="0" y1="512.91" x2="10" y2="512.91" class="mn"/>
<line x1="0" y1="517.25" x2="7" y2="517.25" class="mn"/>
<line x1="0" y1="521.60" x2="29" y2="521.60" class="mj"/>
<text transform="translate(25.7,517.40) rotate(-90)">120</text>
<line x1="0" y1="525.94" x2="7" y2="525.94" class="mn"/>
<line x1="0" y1="530.29" x2="10" y2="530.29" class="mn"/>
<line x1="0" y1="534.63" x2="7" y2="534.63" class="mn"/>
<line x1="0" y1="538.98" x2="10" y2="538.98" class="mn"/>
<line x1="0" y1="543.33" x2="7" y2="543.33" class="mn"/>
<line x1="0" y1="547.67" x2="10" y2="547.67" class="mn"/>
<line x1="0" y1="552.01" x2="7" y2="552.01" class="mn"/>
<line x1="0" y1="556.36" x2="10" y2="556.36" class="mn"/>
<line x1="0" y1="560.70" x2="7" y2="560.70" class="mn"/>
<line x1="0" y1="565.05" x2="29" y2="565.05" class="mj"/>
<text transform="translate(25.7,560.85) rotate(-90)">130</text>
<line x1="0" y1="569.39" x2="7" y2="569.39" class="mn"/>
<line x1="0" y1="573.74" x2="10" y2="573.74" class="mn"/>
<line x1="0" y1="578.09" x2="7" y2="578.09" class="mn"/>
<line x1="0" y1="582.43" x2="10" y2="582.43" class="mn"/>
<line x1="0" y1="586.77" x2="7" y2="586.77" class="mn"/>
<line x1="0" y1="591.12" x2="10" y2="591.12" class="mn"/>
<line x1="0" y1="595.46" x2="7" y2="595.46" class="mn"/>
<line x1="0" y1="599.81" x2="10" y2="599.81" class="mn"/>
<line x1="0" y1="604.15" x2="7" y2="604.15" class="mn"/>
<line x1="0" y1="608.50" x2="29" y2="608.50" class="mj"/>
<text transform="translate(25.7,604.30) rotate(-90)">140</text>
<line x1="0" y1="612.85" x2="7" y2="612.85" class="mn"/>
<line x1="0" y1="617.19" x2="10" y2="617.19" class="mn"/>
<line x1="0" y1="621.53" x2="7" y2="621.53" class="mn"/>
<line x1="0" y1="625.88" x2="10" y2="625.88" class="mn"/>
<line x1="0" y1="630.22" x2="7" y2="630.22" class="mn"/>
<line x1="0" y1="634.57" x2="10" y2="634.57" class="mn"/>
<line x1="0" y1="638.91" x2="7" y2="638.91" class="mn"/>
<line x1="0" y1="643.26" x2="10" y2="643.26" class="mn"/>
<line x1="0" y1="647.61" x2="7" y2="647.61" class="mn"/>
<line x1="0" y1="651.95" x2="29" y2="651.95" class="mj"/>
<text transform="translate(25.7,647.75) rotate(-90)">150</text>
<line x1="0" y1="656.29" x2="7" y2="656.29" class="mn"/>
<line x1="0" y1="660.64" x2="10" y2="660.64" class="mn"/>
<line x1="0" y1="664.98" x2="7" y2="664.98" class="mn"/>
<line x1="0" y1="669.33" x2="10" y2="669.33" class="mn"/>
<line x1="0" y1="673.67" x2="7" y2="673.67" class="mn"/>
<line x1="0" y1="678.02" x2="10" y2="678.02" class="mn"/>
<line x1="0" y1="682.37" x2="7" y2="682.37" class="mn"/>
<line x1="0" y1="686.71" x2="10" y2="686.71" class="mn"/>
<line x1="0" y1="691.05" x2="7" y2="691.05" class="mn"/>
<line x1="0" y1="695.40" x2="29" y2="695.40" class="mj"/>
<text transform="translate(25.7,691.20) rotate(-90)">160</text>
<line x1="0" y1="699.74" x2="7" y2="699.74" class="mn"/>
<line x1="0" y1="704.09" x2="10" y2="704.09" class="mn"/>
<line x1="0" y1="708.43" x2="7" y2="708.43" class="mn"/>
<line x1="0" y1="712.78" x2="10" y2="712.78" class="mn"/>
<line x1="0" y1="717.12" x2="7" y2="717.12" class="mn"/>
<line x1="0" y1="721.47" x2="10" y2="721.47" class="mn"/>
<line x1="0" y1="725.82" x2="7" y2="725.82" class="mn"/>
<line x1="0" y1="730.16" x2="10" y2="730.16" class="mn"/>
<line x1="0" y1="734.50" x2="7" y2="734.50" class="mn"/>
<line x1="0" y1="738.85" x2="29" y2="738.85" class="mj"/>
<text transform="translate(25.7,734.65) rotate(-90)">170</text>
<line x1="0" y1="743.19" x2="7" y2="743.19" class="mn"/>
<line x1="0" y1="747.54" x2="10" y2="747.54" class="mn"/>
</svg></div>
<div id="page"></div>

<svg id="overlay" viewBox="0 0 1919 904">
<path d="M1188.5,514L1188.50,349.00A165,165 0 0 1 1305.17,397.33Z" fill="#f4b622" stroke="#f4b622" stroke-width=".5"/>
<path d="M1188.5,514L1305.17,397.33A165,165 0 0 1 1251.64,666.44Z" fill="#bcd7b3" stroke="#bcd7b3" stroke-width=".5"/>
<path d="M1188.5,514L1251.64,666.44A165,165 0 0 1 1125.36,666.44Z" fill="#8cada7" stroke="#8cada7" stroke-width=".5"/>
<path d="M1188.5,514L1125.36,666.44A165,165 0 0 1 1023.50,514.00Z" fill="#32346e" stroke="#32346e" stroke-width=".5"/>
<path d="M1188.5,514L1023.50,514.00A165,165 0 0 1 1188.50,349.00Z" fill="#ffde59" stroke="#ffde59" stroke-width=".5"/>
  <g font-size="16.7">
    <text x="1277" y="341">Item 1</text>
    <text x="1353.500" y="568">Item 2</text>
    <text x="1191.500" y="701">Item 3</text>
    <text x="1052" y="628" text-anchor="end">Item 4</text>
    <text x="1049.500" y="377" text-anchor="end">Item 5</text>
  </g>
  <g font-size="18.6" font-weight="bold">
    <text x="1277" y="364">12.50%</text>
    <text x="1353.500" y="591">31.25%</text>
    <text x="1191.500" y="723.500">12.50%</text>
    <text x="1052" y="650.500" text-anchor="end">18.75%</text>
    <text x="1050" y="399.500" text-anchor="end">25.00%</text>
  </g>
  <!-- selection -->
  <g fill="none" stroke="#00bdc8" stroke-width="2">
    <rect x="900" y="225" width="575" height="575"/>
    <path d="M1187.200 800 V834"/>
    <path d="M774 852.600 H1600.500"/>
    <circle cx="1187.300" cy="839.600" r="5.100" fill="#fff"/>
  </g>
  <g fill="rgba(0,0,0,.045)" stroke="none">
    <circle cx="900" cy="225.300" r="8.300"/><circle cx="1475" cy="225.300" r="8.300"/>
    <circle cx="900" cy="800.300" r="8.300"/><circle cx="1475" cy="800.300" r="8.300"/>
    <circle cx="1187.300" cy="853.300" r="8.300"/>
  </g>
  <g fill="#fff" stroke="#d3d6da" stroke-width="1">
    <circle cx="900" cy="225" r="6.600"/><circle cx="1475" cy="225" r="6.600"/>
    <circle cx="900" cy="800" r="6.600"/><circle cx="1475" cy="800" r="6.600"/>
    <circle cx="1187.300" cy="852.600" r="6.800"/>
    <rect x="897.300" y="505.700" width="5.400" height="16.200" rx="2.500"/>
    <rect x="1472.300" y="505.700" width="5.400" height="16.200" rx="2.500"/>
  </g>
</svg>

<!-- help button -->
<div id="help"><svg class="abs" style="left:17.500px;top:17.500px" width="26" height="26" viewBox="0 0 26 26" fill="none" stroke="#fff" stroke-width="1.800"><circle cx="13" cy="13" r="11.200"/><circle cx="13" cy="13" r="4.600"/><path d="M4.900 4.900 L9.600 9.600 M21.100 4.900 L16.400 9.600 M4.900 21.100 L9.600 16.400 M21.100 21.100 L16.400 16.400"/></svg></div>

<!-- highlight -->
<div id="redbox"></div>
</div>
</body>
</html>
